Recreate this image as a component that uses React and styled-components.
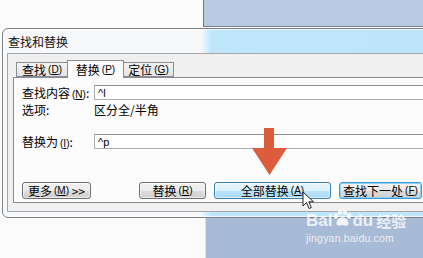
import React from 'react'
import styled, { createGlobalStyle } from 'styled-components'

const Global = createGlobalStyle`
  html, body { margin: 0; padding: 0; background: #fdfdfd; }
  body { overflow: hidden; font-family: "Noto Sans CJK SC", "Liberation Sans", sans-serif; }
`

const Desk = styled.div`
  position: relative;
  width: 423px;
  height: 258px;
  overflow: hidden;
  background: #fbfbfc;
`

const BackWindow = styled.div`
  position: absolute;
  left: ${p => p.left}px;
  top: ${p => p.top}px;
  right: 0;
  height: ${p => p.height}px;
  background: ${p => p.bg};
  border-left: 1px solid ${p => p.edge};
  border-bottom: ${p => p.bottomEdge ? `1px solid ${p.bottomEdge}` : 'none'};
`

const Dialog = styled.div`
  position: absolute;
  left: 2px;
  top: 28px;
  width: 470px;
  height: 188px;
  border: 1px solid #7b7f86;
  border-radius: 6px;
  background: linear-gradient(90deg, #f7f8fa 0, #f7f8fa 198px, #bfe6fb 208px, #bde5fa 100%);
  box-shadow: 0 0 0 1px rgba(255,255,255,0.7) inset;
  display: flex;
  flex-direction: column;
`

const TitleBar = styled.div`
  height: 24px;
  display: flex;
  align-items: center;
  padding-left: 5px;
  font-size: 12px;
  color: #111;
`

const Client = styled.div`
  flex: 1;
  margin: 0 0 5px 4px;
  border: 1px solid #a3a6ab;
  background: #f0f0f0;
  padding: 6px 0 8px 5px;
  display: flex;
  flex-direction: column;
`

const TabList = styled.div`
  display: flex;
  align-items: flex-end;
  height: 17px;
  padding-left: 3px;
  position: relative;
  z-index: 1;
`

const Tab = styled.div`
  width: ${p => p.w}px;
  height: ${p => p.active ? 18 : 15}px;
  margin-bottom: ${p => p.active ? -1 : 0}px;
  box-sizing: border-box;
  border: 1px solid #898c95;
  border-bottom: ${p => p.active ? 'none' : '1px solid #898c95'};
  margin-left: ${p => p.first ? 0 : -1}px;
  background: ${p => p.active ? '#fcfcfc' : 'linear-gradient(#f3f3f3, #e4e4e4)'};
  display: flex;
  align-items: center;
  justify-content: center;
  font-size: 12px;
  color: #000;
  white-space: nowrap;
`

const Key = styled.span`
  font-family: "Liberation Sans", sans-serif;
  font-size: 10px;
  margin-left: 2px;
  u { text-decoration-thickness: 1px; }
`

const Panel = styled.div`
  flex: 1;
  border: 1px solid #898c95;
  background: #fcfcfc;
  padding: 7px 0 0 8px;
  display: flex;
  flex-direction: column;
`

const Row = styled.div`
  display: flex;
  align-items: center;
  height: ${p => p.h}px;
  margin-top: ${p => p.mt || 0}px;
  font-size: 12px;
  color: #000;
  white-space: nowrap;
`

const Label = styled.div`
  width: 72px;
`

const Input = styled.div`
  flex: 1;
  height: 15px;
  box-sizing: border-box;
  border: 1px solid #abadb3;
  border-top-color: #8e9095;
  background: #fff;
  display: flex;
  align-items: center;
  padding-left: 3px;
  font-family: "Liberation Sans", sans-serif;
  font-size: 11px;
`

const Buttons = styled.div`
  display: flex;
  gap: 8px;
  margin-top: 33px;
`

const Button = styled.div`
  width: ${p => p.w}px;
  height: 17px;
  margin-left: ${p => p.ml || 0}px;
  box-sizing: border-box;
  border: 1px solid ${p => p.hot ? '#3c7fb1' : p.def ? '#3d97d4' : '#707070'};
  border-radius: 3px;
  background: ${p => p.hot
    ? 'linear-gradient(#eaf6fd 0, #d9f0fc 50%, #bee6fd 51%, #a7d9f5 100%)'
    : 'linear-gradient(#f2f2f2 0, #ebebeb 50%, #dddddd 51%, #cfcfcf 100%)'};
  box-shadow: ${p => p.def ? 'inset 0 0 0 1px #8fd0f5' : 'inset 0 0 0 1px rgba(255,255,255,0.6)'};
  display: flex;
  align-items: center;
  justify-content: center;
  font-size: 12px;
  color: #000;
  white-space: nowrap;
`

const Overlay = styled.div`
  position: absolute;
  left: ${p => p.x}px;
  top: ${p => p.y}px;
  pointer-events: none;
`

const Brand = styled.div`
  display: flex;
  align-items: center;
  color: rgba(255,255,255,0.8);
  font-family: "Liberation Sans", sans-serif;
  font-weight: bold;
  font-size: 17px;
  line-height: 18px;
  span.cn {
    font-family: "Noto Sans CJK SC", sans-serif;
    font-size: 15px;
    margin-left: 3px;
  }
`

const Site = styled.div`
  margin-top: 2px;
  color: rgba(255,255,255,0.8);
  font-family: "Liberation Sans", sans-serif;
  font-size: 10.5px;
  letter-spacing: 0.2px;
`

const K = ({ k }) => <Key>(<u>{k}</u>)</Key>

export default function App() {
  return (
    <Desk>
      <Global />
      <BackWindow left={203} top={0} height={26} bg="#b8cae2" edge="#6f7887" bottomEdge="#76808e" />
      <BackWindow left={205} top={206} height={60} bg="#a7bbd6" edge="#d7e2ef" />
      <Dialog>
        <TitleBar>查找和替换</TitleBar>
        <Client>
          <TabList>
            <Tab w={52} first>查找<K k="D" /></Tab>
            <Tab w={57} active>替换<K k="P" /></Tab>
            <Tab w={51}>定位<K k="G" /></Tab>
          </TabList>
          <Panel>
            <Row h={15}>
              <Label>查找内容<K k="N" />:</Label>
              <Input>^l</Input>
            </Row>
            <Row h={14} mt={2}>
              <Label>选项:</Label>
              <div>区分全/半角</div>
            </Row>
            <Row h={15} mt={18}>
              <Label>替换为<K k="I" />:</Label>
              <Input>^p</Input>
            </Row>
            <Buttons>
              <Button w={69}>更多<K k="M" />&nbsp;&gt;&gt;</Button>
              <Button w={67} ml={40}>替换<K k="R" /></Button>
              <Button w={117} hot>全部替换<K k="A" /></Button>
              <Button w={83} def>查找下一处<K k="F" /></Button>
            </Buttons>
          </Panel>
        </Client>
      </Dialog>

      <Overlay x={251} y={127}>
        <svg width="38" height="50" viewBox="0 0 38 50">
          <polygon points="13,1 23,1 23,21 36,21 18.5,48 1,21 13,21" fill="#dc5d3b" />
        </svg>
      </Overlay>

      <Overlay x={302} y={191}>
        <svg width="13" height="19" viewBox="0 0 13 19">
          <path d="M1 1 L1 15 L4.5 11.5 L7 17.5 L9.3 16.5 L6.8 10.8 L11.5 10.8 Z" fill="#fff" stroke="#222" strokeWidth="1" strokeLinejoin="round" />
        </svg>
      </Overlay>

      <Overlay x={306} y={212}>
        <Brand>
          Bai
          <svg width="20" height="20" viewBox="0 0 20 20" style={{ margin: '-6px 0 0 0' }}>
            <g fill="rgba(255,255,255,0.85)">
              <ellipse cx="4" cy="8" rx="2.2" ry="2.7" />
              <ellipse cx="8" cy="4" rx="2.2" ry="2.7" />
              <ellipse cx="13" cy="4" rx="2.2" ry="2.7" />
              <ellipse cx="17" cy="8" rx="2.2" ry="2.7" />
              <path d="M10.5 9 C7 9 4 13.5 4.5 16 C5 18 7.5 18 10.5 17 C13.5 18 16 18 16.5 16 C17 13.5 14 9 10.5 9 Z" />
            </g>
          </svg>
          du<span className="cn">经验</span>
        </Brand>
        <Site>jingyan.baidu.com</Site>
      </Overlay>
    </Desk>
  )
}
